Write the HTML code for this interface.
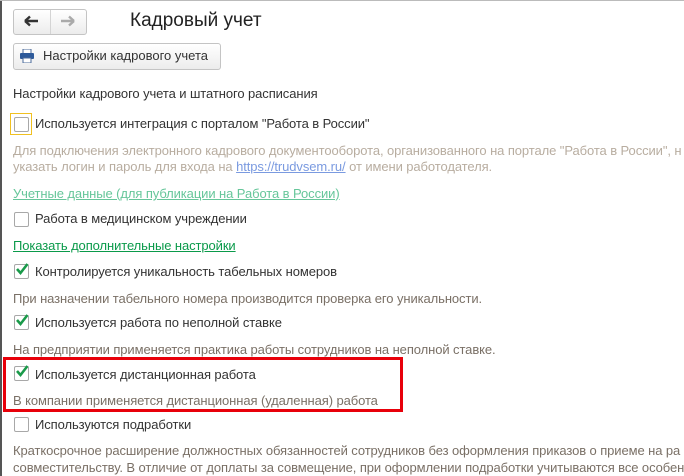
<!DOCTYPE html>
<html><head><meta charset="utf-8"><style>
body{margin:0;width:684px;height:476px;overflow:hidden;background:#fff;font-family:"Liberation Sans",Arial,sans-serif;font-size:13px;color:#333;position:relative}
.a{position:absolute;white-space:nowrap}
.a.t,.d,.lt{letter-spacing:-0.09px}
.cb{position:absolute;width:13px;height:13px;border:1px solid #a8a8a8;border-radius:2px;background:#fff}
.d{color:#7a7066}
.lt{color:#b8ada0}
</style></head><body>
<div class="a" style="left:0;top:0;width:2px;height:476px;background:#555"></div>
<div class="a" style="left:0;top:0;width:684px;height:1px;background:#bbb"></div>
<div class="a" style="left:13px;top:9px;width:72px;height:24px;border:1px solid #c4c4c4;border-radius:3px;background:linear-gradient(#fff,#ececec)"></div>
<div class="a" style="left:50px;top:10px;width:1px;height:24px;background:#d4d4d4"></div>
<svg class="a" style="left:24px;top:15px" width="16" height="12"><path d="M1 6H14M1 6L6 1.5M1 6L6 10.5" stroke="#333" stroke-width="2.4" fill="none"/></svg>
<svg class="a" style="left:60px;top:15px" width="16" height="12"><path d="M1 6H14M14 6L9 1.5M14 6L9 10.5" stroke="#aaa" stroke-width="2.4" fill="none"/></svg>
<div class="a" style="left:130px;top:10px;font-size:19px;color:#222">Кадровый учет</div>
<div class="a" style="left:13px;top:43px;width:206px;height:25px;border:1px solid #c4c4c4;border-radius:3px;background:linear-gradient(#fff,#ececec)"></div>
<svg class="a" style="left:20px;top:49px" width="14" height="14"><rect x="3" y="0" width="8" height="5" fill="#fff" stroke="#4a6a9a"/><rect x="0" y="4" width="14" height="6" rx="1" fill="#2d5a9a"/><rect x="3" y="9" width="8" height="5" fill="#fff" stroke="#4a6a9a"/></svg>
<div class="a" style="left:43px;top:48px">Настройки кадрового учета</div>
<div class="a t" style="left:13px;top:86px">Настройки кадрового учета и штатного расписания</div>
<div class="a" style="left:10px;top:113px;width:20px;height:20px;border:1px solid #f0c020"></div>
<div class="cb" style="left:14px;top:117px"></div>
<div class="a t" style="left:35px;top:116px">Используется интеграция с порталом "Работа в России"</div>
<div class="a lt" style="left:13px;top:143px">Для подключения электронного кадрового документооборота, организованного на портале "Работа в России", н</div>
<div class="a lt" style="left:13px;top:159px">указать логин и пароль для входа на <span style="color:#7a9ae0;text-decoration:underline">https://trudvsem.ru/</span> от имени работодателя.</div>
<div class="a t" style="left:13px;top:186px;color:#66c69a;text-decoration:underline">Учетные данные (для публикации на Работа в России)</div>
<div class="cb" style="left:14px;top:212px"></div>
<div class="a t" style="left:35px;top:211px">Работа в медицинском учреждении</div>
<div class="a t" style="left:13px;top:238px;color:#0a9a4a;text-decoration:underline">Показать дополнительные настройки</div>
<div class="cb" style="left:14px;top:264px"></div>
<svg class="a" style="left:15px;top:262px" width="14" height="14"><path d="M2 7L5.5 11L12.5 2" stroke="#1a9a4a" stroke-width="2.6" fill="none"/></svg>
<div class="a t" style="left:35px;top:264px">Контролируется уникальность табельных номеров</div>
<div class="a d" style="left:13px;top:291px">При назначении табельного номера производится проверка его уникальности.</div>
<div class="cb" style="left:14px;top:315px"></div>
<svg class="a" style="left:15px;top:313px" width="14" height="14"><path d="M2 7L5.5 11L12.5 2" stroke="#1a9a4a" stroke-width="2.6" fill="none"/></svg>
<div class="a t" style="left:35px;top:315px">Используется работа по неполной ставке</div>
<div class="a d" style="left:13px;top:342px">На предприятии применяется практика работы сотрудников на неполной ставке.</div>
<div class="a" style="left:3px;top:357px;width:394px;height:49px;border:3px solid #e8000a"></div>
<div class="cb" style="left:14px;top:366px"></div>
<svg class="a" style="left:15px;top:364px" width="14" height="14"><path d="M2 7L5.5 11L12.5 2" stroke="#1a9a4a" stroke-width="2.6" fill="none"/></svg>
<div class="a t" style="left:35px;top:367px">Используется дистанционная работа</div>
<div class="a d" style="left:13px;top:393px">В компании применяется дистанционная (удаленная) работа</div>
<div class="cb" style="left:14px;top:417px"></div>
<div class="a t" style="left:35px;top:417px">Используются подработки</div>
<div class="a d" style="left:13px;top:443px">Краткосрочное расширение должностных обязанностей сотрудников без оформления приказов о приеме на ра</div>
<div class="a d" style="left:13px;top:460px">совместительству. В отличие от доплаты за совмещение, при оформлении подработки учитываются все особен</div>
</body></html>
